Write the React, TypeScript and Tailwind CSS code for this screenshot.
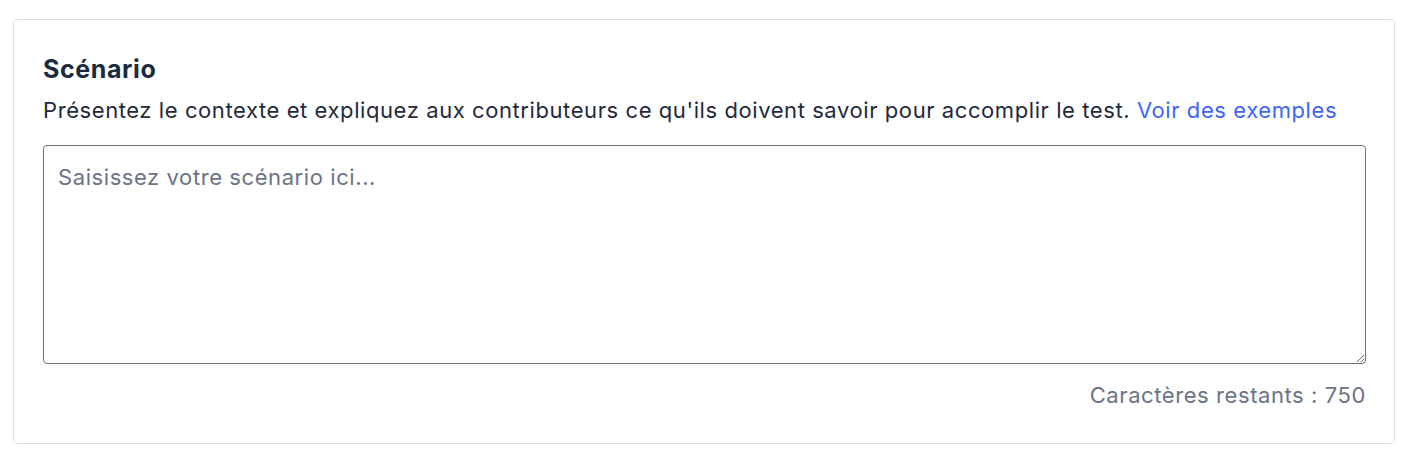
export default function App() {
  return (
    <div className="min-h-screen bg-white pt-[19px] pl-[13px] pr-[15px] font-['Inter',sans-serif]">
      <section className="rounded border border-[#e0e2e6] bg-white pl-[29px] pr-[28px] pt-[34px] pb-[34px]">
        <h2 className="text-[25px] font-bold leading-[30px] tracking-[0.6px] text-[#1c2a40]">Scénario</h2>
        <p className="mt-[12px] text-[22px] leading-[28px] tracking-[0.58px] text-[#1f2a3c]">
          Présentez le contexte et expliquez aux contributeurs ce qu'ils doivent savoir pour accomplir le test.{" "}
          <a href="#" className="text-[#3d66f5]">Voir des exemples</a>
        </p>
        <textarea
          placeholder="Saisissez votre scénario ici..."
          className="mt-[21px] block h-[219px] w-full rounded border border-[#6b7280] px-[14px] py-[17px] text-[22px] leading-[28px] tracking-[0.58px] text-[#1f2a3c] outline-none placeholder:text-[#6b7385]"
        />
        <div className="mt-[17px] text-right text-[22px] leading-[28px] tracking-[0.58px] text-[#6b7385]">
          Caractères restants : 750
        </div>
      </section>
    </div>
  );
}
